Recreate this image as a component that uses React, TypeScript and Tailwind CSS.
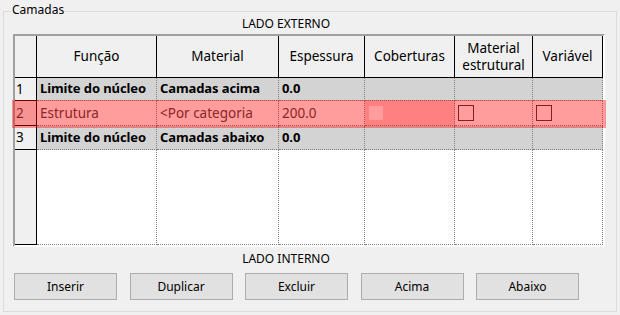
import { FC, ReactNode } from "react";

const font = { fontFamily: '"Noto Sans", "Open Sans", sans-serif' };

const Head: FC<{ children?: ReactNode }> = ({ children }) => (
  <div className="flex items-center justify-center text-center leading-[17px] bg-[#f0f0f0] border-r border-b border-black">
    {children}
  </div>
);

const RowNum: FC<{ n?: string; dark?: boolean }> = ({ n, dark }) => (
  <div
    className={
      "flex items-center pl-[1px] bg-[#f0f0f0] border-r border-b border-black " +
      (dark ? "text-[#404040]" : "text-black")
    }
  >
    {n}
  </div>
);

const Cell: FC<{ children?: ReactNode; bg?: string; bold?: boolean; dark?: boolean }> = ({
  children,
  bg = "bg-white",
  bold,
  dark,
}) => (
  <div
    className={
      "flex items-center pl-[3px] whitespace-nowrap overflow-hidden border-r border-b border-dotted border-[#808080] " +
      bg +
      (bold ? " font-bold text-[13px] tracking-[-0.1px] text-black" : "") +
      (dark ? " text-[#404040]" : "")
    }
  >
    {children}
  </div>
);

const Check: FC = () => <div className="w-[16px] h-[16px] border border-[#333] bg-white" />;

const buttons = ["Inserir", "Duplicar", "Excluir", "Acima", "Abaixo"];

export default function App() {
  return (
    <div className="w-[620px] h-[315px] bg-[#f0f0f0] text-[12px] text-black pt-[11px] px-[3px]" style={font}>
      <div className="relative h-[301px] border border-[#dcdcdc]">
        <span className="absolute -top-[10px] left-[7px] px-[1px] leading-[16px] bg-[#f0f0f0]">Camadas</span>

        <div className="mt-[4px] pr-[48px] text-center leading-[16px]">LADO EXTERNO</div>

        <div className="ml-[9px] mt-[2px] w-[592px] border-2 border-t-[#a0a0a0] border-l-[#a0a0a0] border-r-white border-b-white text-[13.5px]">
          <div className="grid grid-cols-[22px_120px_122px_86px_90px_78px_70px] grid-rows-[42px_23px_25px_24px_95px]">
            <Head />
            <Head>Função</Head>
            <Head>Material</Head>
            <Head>Espessura</Head>
            <Head>Coberturas</Head>
            <Head>
              Material
              <br />
              estrutural
            </Head>
            <Head>Variável</Head>

            <RowNum n="1" />
            <Cell bg="bg-[#d3d3d3]" bold>Limite do núcleo</Cell>
            <Cell bg="bg-[#d3d3d3]" bold>Camadas acima</Cell>
            <Cell bg="bg-[#d3d3d3]" bold>0.0</Cell>
            <Cell bg="bg-[#d3d3d3]" />
            <Cell bg="bg-[#d3d3d3]" />
            <Cell bg="bg-[#d3d3d3]" />

            <RowNum n="2" dark />
            <Cell dark>Estrutura</Cell>
            <Cell dark>&lt;Por categoria</Cell>
            <Cell dark>200.0</Cell>
            <Cell bg="bg-[#ffd2d2]">
              <div className="ml-[1px] w-[14px] h-[14px] bg-white" />
            </Cell>
            <Cell>
              <Check />
            </Cell>
            <Cell>
              <Check />
            </Cell>

            <RowNum n="3" />
            <Cell bg="bg-[#d3d3d3]" bold>Limite do núcleo</Cell>
            <Cell bg="bg-[#d3d3d3]" bold>Camadas abaixo</Cell>
            <Cell bg="bg-[#d3d3d3]" bold>0.0</Cell>
            <Cell bg="bg-[#d3d3d3]" />
            <Cell bg="bg-[#d3d3d3]" />
            <Cell bg="bg-[#d3d3d3]" />

            <RowNum />
            <Cell />
            <Cell />
            <Cell />
            <Cell />
            <Cell />
            <Cell />
          </div>
        </div>

        <div className="mt-[4px] pr-[48px] text-center leading-[16px]">LADO INTERNO</div>

        <div className="ml-[10px] mt-[6px] flex gap-[12.5px]">
          {buttons.map((b) => (
            <button
              key={b}
              className="w-[103px] h-[27px] bg-[#e1e1e1] border border-[#adadad] leading-[16px]"
            >
              {b}
            </button>
          ))}
        </div>

        {/* selected row highlight */}
        <div className="absolute left-[8px] top-[88px] w-[594px] h-[28px] bg-[#ff000063] pointer-events-none" />
      </div>
    </div>
  );
}
